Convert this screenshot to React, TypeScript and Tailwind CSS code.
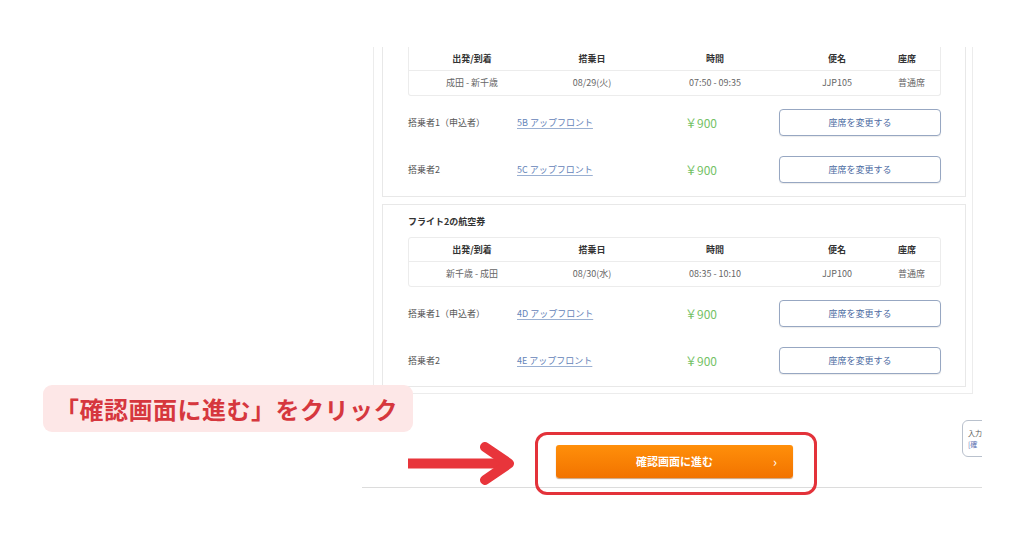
import React from 'react'

type Flight = {
  title?: string
  route: string
  date: string
  time: string
  flightNo: string
  seatClass: string
  passengers: { label: string; seat: string; price: string }[]
}

const flights: Flight[] = [
  {
    route: '成田 - 新千歳',
    date: '08/29(火)',
    time: '07:50 - 09:35',
    flightNo: 'JJP105',
    seatClass: '普通席',
    passengers: [
      { label: '搭乗者1（申込者）', seat: '5B アップフロント', price: '￥900' },
      { label: '搭乗者2', seat: '5C アップフロント', price: '￥900' },
    ],
  },
  {
    title: 'フライト2の航空券',
    route: '新千歳 - 成田',
    date: '08/30(水)',
    time: '08:35 - 10:10',
    flightNo: 'JJP100',
    seatClass: '普通席',
    passengers: [
      { label: '搭乗者1（申込者）', seat: '4D アップフロント', price: '￥900' },
      { label: '搭乗者2', seat: '4E アップフロント', price: '￥900' },
    ],
  },
]

const headers = ['出発/到着', '搭乗日', '時間', '便名', '座席']

function FlightTable({ f, clipped }: { f: Flight; clipped?: boolean }) {
  const cells = [f.route, f.date, f.time, f.flightNo, f.seatClass]
  return (
    <div
      className={`grid grid-cols-[126px_114px_132px_112px_1fr] rounded-[3px] border border-[#ececec] ${
        clipped ? 'border-t-0 rounded-t-none' : ''
      }`}
    >
      {headers.map((h, i) => (
        <div
          key={h}
          className={`flex h-[24px] items-center border-b border-[#ececec] text-[9px] font-bold text-[#333] ${
            i === 4 ? 'pl-[5px]' : 'justify-center'
          }`}
        >
          {h}
        </div>
      ))}
      {cells.map((c, i) => (
        <div
          key={i}
          className={`flex h-[24px] items-center text-[9px] text-[#666] ${
            i === 4 ? 'pl-[5px]' : 'justify-center'
          }`}
        >
          {c}
        </div>
      ))}
    </div>
  )
}

function FlightCard({ f, first }: { f: Flight; first?: boolean }) {
  return (
    <div
      className={`flex flex-col border-x border-b border-[#e8e8e8] pl-[25px] pr-[24px] ${
        first ? 'pb-[13px]' : 'border-t pt-[10px] pb-[12px]'
      }`}
    >
      {f.title && (
        <p className="mb-[8px] text-[9px] font-bold leading-[14px] text-[#333]">{f.title}</p>
      )}
      <FlightTable f={f} clipped={first} />
      <div className="mt-[13px] flex flex-col gap-[20px]">
        {f.passengers.map((p) => (
          <div key={p.seat} className="flex h-[27px] items-center">
            <span className="w-[109px] text-[9px] text-[#555]">{p.label}</span>
            <span className="w-[168px] text-[9px] text-[#6483b8] underline decoration-[#9ab0d2] underline-offset-2">
              {p.seat}
            </span>
            <span className="w-[94px] text-[12px] text-[#74c265]">{p.price}</span>
            <button className="flex h-[27px] w-[162px] items-center justify-center rounded-[4px] border border-[#97a7c2] bg-white text-[9px] text-[#4b6aa2] shadow-[0_1px_1px_rgba(0,0,0,0.08)]">
              座席を変更する
            </button>
          </div>
        ))}
      </div>
    </div>
  )
}

export default function App() {
  return (
    <div className="relative h-[538px] w-[1024px] overflow-hidden bg-white font-['Noto_Sans_CJK_JP','Noto_Sans',sans-serif]">
      {/* captured page */}
      <div className="absolute left-[362px] top-[47px] flex h-[441px] w-[620px] flex-col overflow-hidden border-b border-[#dcdcdc]">
        <div className="ml-[11px] flex w-[600px] flex-col gap-[7px] border-x border-b border-[#ececec] pb-[6px] pl-[8px] pr-[6px]">
          <FlightCard f={flights[0]} first />
          <FlightCard f={flights[1]} />
        </div>

        <button className="relative ml-[194px] mt-[51px] flex h-[33px] w-[237px] items-center justify-center rounded-[3px] bg-gradient-to-b from-[#ff8f0a] to-[#f27300] text-[11px] font-bold text-white shadow-[0_1px_1px_rgba(150,70,0,0.5)]">
          確認画面に進む
          <span className="absolute right-[16px] top-[7px] text-[13px] font-normal">›</span>
        </button>

        <div className="absolute left-[600px] top-[373px] flex h-[37px] w-[30px] flex-col justify-center rounded-l-[6px] border border-[#b9c1cd] pl-[5px] text-[7px] leading-[11px]">
          <span className="text-[#555]">入力</span>
          <span className="text-[#5a6fb0]">[確</span>
        </div>
      </div>

      {/* annotations */}
      <div className="absolute left-[43px] top-[385px] flex h-[47px] w-[370px] items-center rounded-[9px] bg-[#fde7e7] pl-[12px]">
        <span className="text-[24px] font-bold leading-none tracking-[0.5px] text-[#d6373e]">
          「確認画面に進む」をクリック
        </span>
      </div>

      <svg className="absolute left-[403px] top-[440px]" width="115" height="48" viewBox="0 0 115 48">
        <path d="M5 23.5 H100" stroke="#e8353b" strokeWidth="10" />
        <path d="M82 7 L106 23.5 L82 40" fill="none" stroke="#e8353b" strokeWidth="10" strokeLinecap="round" strokeLinejoin="round" />
      </svg>

      <div className="absolute left-[535px] top-[432px] h-[63px] w-[282px] rounded-[12px] border-[3px] border-[#e3323a]" />
    </div>
  )
}
